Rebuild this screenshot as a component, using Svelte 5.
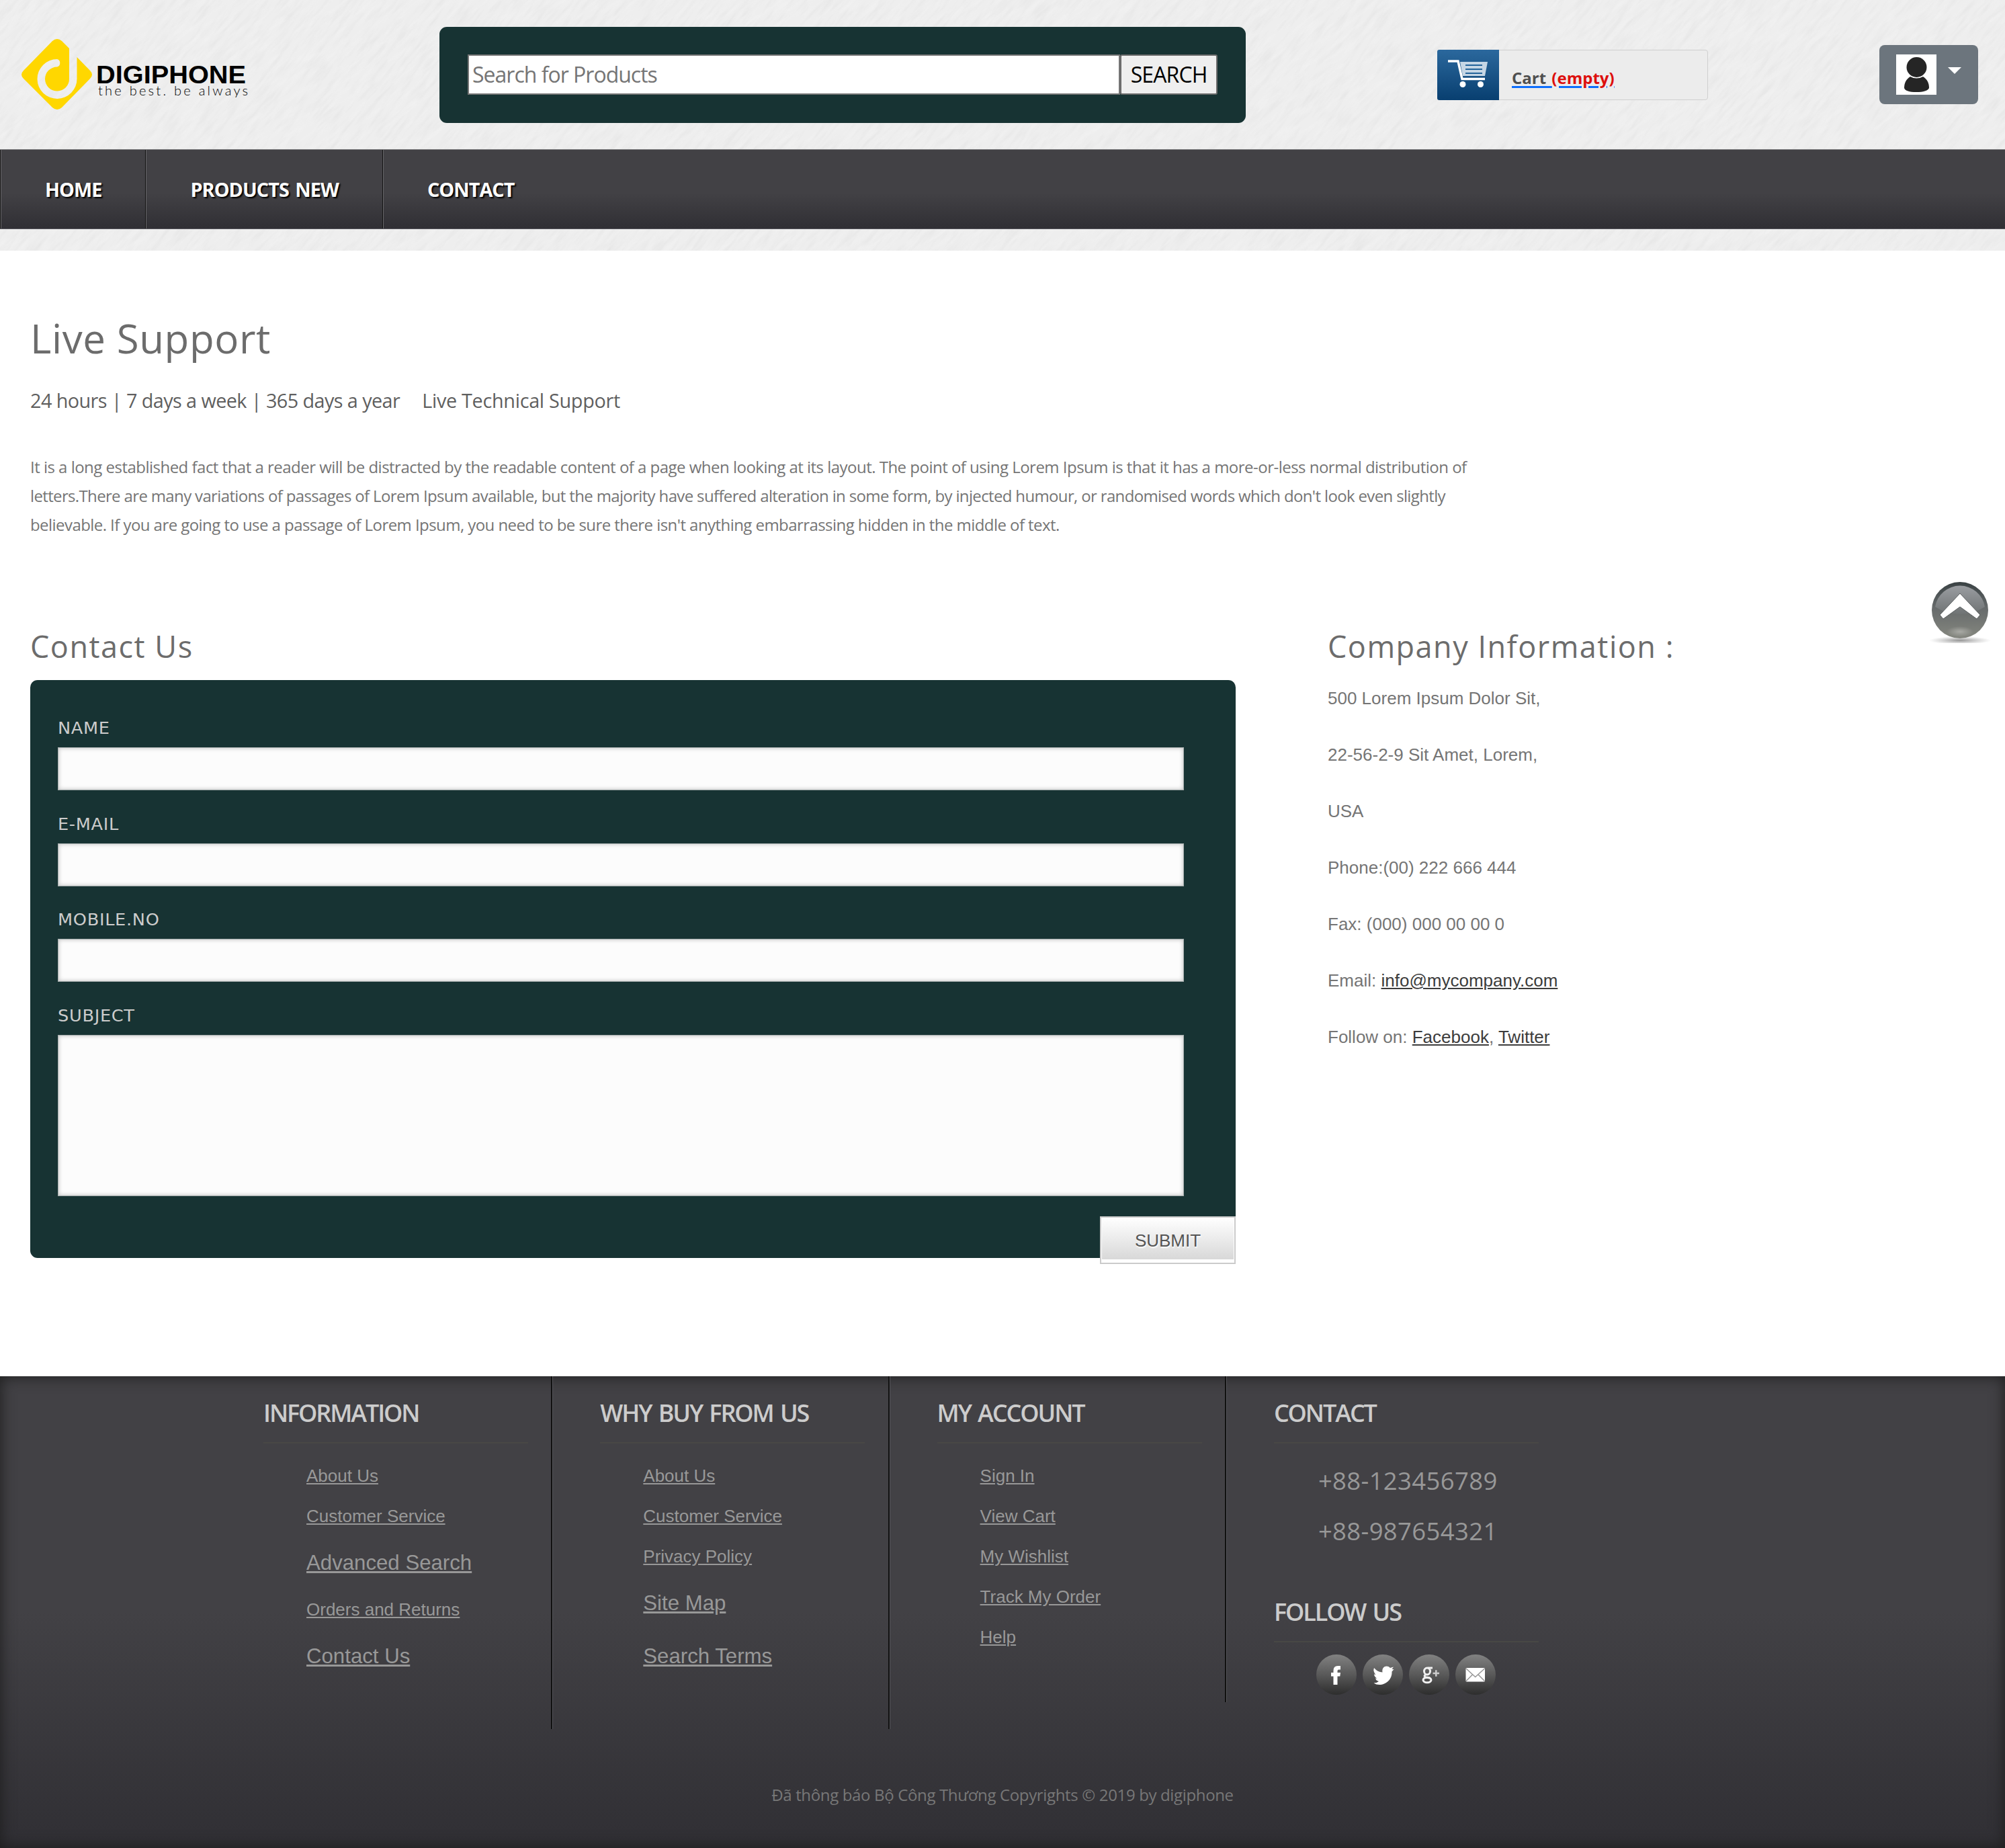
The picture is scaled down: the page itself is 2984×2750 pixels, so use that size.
<script>
  const nav = ['Home', 'Products New', 'Contact'];
  const fields = ['Name', 'E-mail', 'Mobile.No'];
  const columns = [
    {
      title: 'Information',
      links: [
        { text: 'About Us' },
        { text: 'Customer Service' },
        { text: 'Advanced Search', large: true },
        { text: 'Orders and Returns' },
        { text: 'Contact Us', large: true }
      ]
    },
    {
      title: 'Why buy from us',
      links: [
        { text: 'About Us' },
        { text: 'Customer Service' },
        { text: 'Privacy Policy' },
        { text: 'Site Map', large: true },
        { text: 'Search Terms', large: true }
      ]
    },
    {
      title: 'My account',
      short: true,
      links: [
        { text: 'Sign In' },
        { text: 'View Cart' },
        { text: 'My Wishlist' },
        { text: 'Track My Order' },
        { text: 'Help' }
      ]
    }
  ];
</script>

<div class="page">
  <!-- brushed paper texture behind the header -->
  <svg class="paper" width="2984" height="373" viewBox="0 0 2984 373" aria-hidden="true">
    <defs>
      <filter id="dark" x="0" y="0" width="100%" height="100%">
        <feTurbulence type="fractalNoise" baseFrequency="0.025 0.15" numOctaves="3" seed="4" />
        <feColorMatrix values="0 0 0 0 0  0 0 0 0 0  0 0 0 0 0  .35 0 0 0 -.145" />
      </filter>
      <filter id="light" x="0" y="0" width="100%" height="100%">
        <feTurbulence type="fractalNoise" baseFrequency="0.025 0.15" numOctaves="3" seed="9" />
        <feColorMatrix values="0 0 0 0 1  0 0 0 0 1  0 0 0 0 1  2.5 0 0 0 -1.1" />
      </filter>
    </defs>
    <rect x="-300" y="-2200" width="3600" height="4800" transform="rotate(-50 1492 186)" filter="url(#dark)" opacity=".17" />
    <rect x="-300" y="-2200" width="3600" height="4800" transform="rotate(-38 1492 186)" filter="url(#light)" opacity=".16" />
  </svg>

  <header class="top">
    <a class="logo" href="#home" aria-label="Digiphone">
      <svg width="380" height="140" viewBox="0 0 380 140">
        <path
          fill="#ffd700"
          d="M78 20Q85 14 92 20L103 31V76A18 18 0 1 1 85 58.500A6 6 0 0 0 85 47A29.500 29.500 0 1 0 114.500 76V44L134 64Q140 70 134 76L92 119Q85 125 78 119L35 76Q29 70 35 64Z"
        />
        <text class="brand" x="143" y="83" textLength="223" lengthAdjust="spacingAndGlyphs">DIGIPHONE</text>
        <text class="tag" x="146" y="100.500" textLength="223" lengthAdjust="spacing">the best. be always</text>
      </svg>
    </a>

    <form class="search">
      <input type="text" placeholder="Search for Products" />
      <button type="button">SEARCH</button>
    </form>

    <a class="cart" href="#cart">
      <span class="cart-icon">
        <svg width="92" height="74" viewBox="0 0 92 74">
          <path fill="#c5d6e5" d="M34 18H75L71 39H38Z" />
          <path stroke="#23639a" stroke-width="2.200" d="M42 23H67M42 29H67M42 35H67" />
          <path fill="none" stroke="#fff" stroke-width="3.500" d="M16 17H31L37 43.500H71" />
          <circle cx="38" cy="51.500" r="4.500" fill="#fff" />
          <circle cx="64.500" cy="51.500" r="4.500" fill="#fff" />
        </svg>
      </span>
      <span class="cart-text">Cart <b>(empty)</b></span>
    </a>

    <button class="profile" type="button" aria-label="Account">
      <svg width="60" height="60" viewBox="0 0 60 60">
        <rect width="60" height="60" fill="#fff" />
        <ellipse cx="30.500" cy="19" rx="15" ry="15" fill="#252525" />
        <path fill="#252525" d="M21 33Q30 38 40 33C46 37 49 42 49 50Q46 56 30 56T12 50C12 42 15 37 21 33Z" />
      </svg>
      <i class="caret"></i>
    </button>
  </header>

  <nav class="menu">
    {#each nav as item}
      <a href="#{item}">{item}</a>
    {/each}
  </nav>

  <main>
    <h1>Live Support</h1>
    <p class="hours"><span>24 hours | 7 days a week | 365 days a year</span><span class="tech">Live Technical Support</span></p>
    <div class="intro">
      <p class="l1">It is a long established fact that a reader will be distracted by the readable content of a page when looking at its layout. The point of using Lorem Ipsum is that it has a more-or-less normal distribution of</p>
      <p class="l2">letters.There are many variations of passages of Lorem Ipsum available, but the majority have suffered alteration in some form, by injected humour, or randomised words which don't look even slightly</p>
      <p class="l3">believable. If you are going to use a passage of Lorem Ipsum, you need to be sure there isn't anything embarrassing hidden in the middle of text.</p>
    </div>

    <div class="row">
      <section class="contact">
        <h2>Contact Us</h2>
        <form class="panel">
          {#each fields as field}
            <label>{field}<input type="text" /></label>
          {/each}
          <label>Subject<textarea></textarea></label>
          <button class="submit" type="button"><span>Submit</span></button>
        </form>
      </section>

      <section class="company">
        <h2>Company Information :</h2>
        <p>500 Lorem Ipsum Dolor Sit,</p>
        <p>22-56-2-9 Sit Amet, Lorem,</p>
        <p>USA</p>
        <p>Phone:(00) 222 666 444</p>
        <p>Fax: (000) 000 00 00 0</p>
        <p>Email: <a href="#mail">info@mycompany.com</a></p>
        <p>Follow on: <a href="#facebook">Facebook</a>, <a href="#twitter">Twitter</a></p>
      </section>
    </div>
  </main>

  <footer>
    <div class="cols">
      {#each columns as col}
        <section class="col" class:short={col.short}>
          <h4>{col.title}</h4>
          <ul>
            {#each col.links as link}
              <li class:large={link.large}><a href="#{link.text}">{link.text}</a></li>
            {/each}
          </ul>
        </section>
      {/each}
      <section class="col last">
        <h4>Contact</h4>
        <ul class="phones">
          <li>+88-123456789</li>
          <li>+88-987654321</li>
        </ul>
        <h4 class="follow">Follow us</h4>
        <div class="social">
          <a href="#facebook" aria-label="Facebook">
            <svg viewBox="0 0 60 60"><path fill="#fff" d="M25.500 45V32.500H22V27H25.500V24Q25.500 17 32 17H36V22.500H33.500Q31.500 22.500 31.500 24.500V27H36L35.300 32.500H31.500V45Z" /></svg>
          </a>
          <a href="#twitter" aria-label="Twitter">
            <svg viewBox="0 0 60 60"><path fill="#fff" d="M17 20Q22 26 29.500 26.500C28 17 37 15.500 41 20L46 18.500 43.500 22 46.500 22 43.500 25.500C44 37 35 45 25 45Q20 45 16.500 42.500 21 42.500 24 40 20 39 19 35.500H21.500Q17.500 33.500 17 29.500L19.500 30Q15 25 17 20Z" /></svg>
          </a>
          <a href="#google" aria-label="Google Plus">
            <svg viewBox="0 0 60 60">
              <g fill="none" stroke="#f0f0f0" stroke-width="3">
                <ellipse cx="27" cy="25" rx="4.500" ry="5" />
                <path d="M28 20H35M25 30Q21 32 25 34L31 35M35 30" />
                <ellipse cx="27" cy="38" rx="6" ry="3.800" />
                <path stroke="#ccc" stroke-width="2.500" d="M35.500 28H45M40.300 23.300V32.700" />
              </g>
            </svg>
          </a>
          <a href="#mail" aria-label="Mail">
            <svg viewBox="0 0 60 60">
              <rect x="15.500" y="20" width="28.500" height="20.500" rx="1.500" fill="#fff" />
              <path fill="none" stroke="#999" stroke-width="1.600" d="M16 21L29.700 33.500 43.500 21M16 39.500L25.500 30M43.500 39.500L34 30" />
            </svg>
          </a>
        </div>
      </section>
    </div>
    <p class="copy">Đã thông báo Bộ Công Thương Copyrights © 2019 by digiphone</p>
  </footer>

  <a class="to-top" href="#top" aria-label="Back to top">
    <svg width="100" height="92" viewBox="0 0 100 92">
      <defs>
        <linearGradient id="ball" x1="0" y1="0" x2="0" y2="1">
          <stop offset="0" stop-color="#394143" />
          <stop offset=".45" stop-color="#666a6b" />
          <stop offset="1" stop-color="#85877f" />
        </linearGradient>
        <linearGradient id="gloss" x1="0" y1="0" x2="0" y2="1">
          <stop offset="0" stop-color="#9a9da1" />
          <stop offset="1" stop-color="#6f7374" />
        </linearGradient>
        <radialGradient id="glow"><stop offset="0" stop-color="#a9aaa5" /><stop offset="1" stop-color="#a9aaa5" stop-opacity="0" /></radialGradient>
        <radialGradient id="ground"><stop offset="0" stop-color="#777" stop-opacity=".8" /><stop offset="1" stop-color="#999" stop-opacity="0" /></radialGradient>
      </defs>
      <ellipse cx="50" cy="88" rx="46" ry="6" fill="url(#ground)" />
      <circle cx="50" cy="43" r="42" fill="url(#ball)" />
      <path fill="url(#gloss)" d="M13 38A37.500 37.500 0 0 1 87 38Q70 49 50 49T13 38Z" />
      <ellipse cx="50" cy="75" rx="20" ry="8" fill="url(#glow)" />
      <path fill="#fff" stroke="#5c6061" stroke-width="1" d="M50 18L80 50 75 56 50 38 25 56 20 50Z" />
    </svg>
  </a>
</div>

<style>
  :global(body) {
    background: #fff;
  }
  .page {
    position: relative;
    width: 2984px;
    height: 2750px;
    overflow: hidden;
    font-family: 'Open Sans', 'Noto Sans', sans-serif;
    background: #eee;
  }
  .page :global(*) {
    box-sizing: border-box;
  }
  .paper {
    position: absolute;
    top: 0;
    left: 0;
  }
  .top,
  .menu,
  main,
  footer {
    position: relative;
  }
  h1, h2, h4, p, ul {
    margin: 0;
    padding: 0;
    font-weight: 400;
    white-space: nowrap;
  }
  ul {
    list-style: none;
  }

  .top {
    display: flex;
    align-items: center;
    height: 222px;
  }
  .logo {
    display: block;
    width: 380px;
    height: 140px;
    margin-right: 274px;
  }
  .brand {
    font: 700 37px 'Liberation Sans', sans-serif;
  }
  .tag {
    font: 300 20px Lato, sans-serif;
  }
  .search {
    display: flex;
    width: 1200px;
    height: 143px;
    padding: 41px 42px;
    margin-right: 285px;
    border-radius: 11px;
    background: #173333;
  }
  .search input {
    width: 972px;
    height: 60px;
    padding: 0 5px;
    border: 2px solid #767676;
    background: #fff;
    font: 32px 'Open Sans', sans-serif;
    letter-spacing: -1px;
  }
  .search input::placeholder {
    color: #757575;
  }
  .search button {
    width: 145px;
    height: 60px;
    padding: 0;
    border: 2px solid #6b6b6b;
    border-radius: 3px;
    background: #efefef;
    color: #000;
    font: 32px 'Open Sans', sans-serif;
    letter-spacing: -0.9px;
  }
  .cart {
    display: flex;
    width: 403px;
    height: 75px;
    margin-right: 255px;
    border: 1px solid #cfcfcf;
    border-radius: 4px;
    background: #ececec;
    text-decoration: none;
  }
  .cart-icon {
    width: 92px;
    height: 75px;
    margin: -1px 19px 0 -1px;
    border-radius: 3px 0 0 3px;
    background: linear-gradient(#2b689d, #083f70);
  }
  .cart-text {
    font-size: 24px;
    line-height: 82px;
    font-weight: 700;
    letter-spacing: 0;
    word-spacing: 2px;
    color: #4f4f4f;
    white-space: nowrap;
    text-decoration: underline #0d6efd 3px;
    text-underline-offset: 3px;
  }
  .cart-text b {
    font-weight: 700;
    color: #dd0f0e;
  }
  .profile {
    display: flex;
    align-items: flex-start;
    width: 147px;
    height: 88px;
    padding: 14px 25px;
    border: 0;
    border-radius: 8px;
    background: #6c757d;
  }
  .profile svg {
    flex: none;
  }
  .caret {
    margin: 19px 0 0 17px;
    border: 10px solid transparent;
    border-top-color: #fff;
    border-bottom: 0;
  }

  .menu {
    display: flex;
    height: 119px;
    border-top: 1px solid #7b7b7d;
    border-bottom: 1px solid #55545a;
    background: linear-gradient(#424145 55%, #302f34);
  }
  .menu a {
    padding: 0 65px 0 66px;
    border-left: 1px solid #111;
    box-shadow: inset 1px 0 #69686b;
    color: #fff;
    font-size: 28.8px;
    font-weight: 700;
    letter-spacing: -0.95px;
    word-spacing: 3px;
    line-height: 118px;
    text-decoration: none;
    text-shadow: 2px 2px 2px #000;
    text-transform: uppercase;
    white-space: nowrap;
  }

  main {
    height: 1675px;
    margin-top: 32px;
    padding: 90px 45px 0;
    background: #fff;
    color: #757575;
  }
  h1 {
    font-size: 60px;
    line-height: 80px;
    letter-spacing: 0.6px;
    color: #6c6c6c;
  }
  .hours {
    display: flex;
    gap: 33px;
    margin-top: 33px;
    font-size: 28.8px;
    line-height: 40px;
    letter-spacing: -0.58px;
    color: #5f5f5f;
  }
  .tech {
    letter-spacing: -0.3px;
  }
  .intro {
    margin-top: 57px;
    font-size: 24px;
    line-height: 43px;
  }
  .l1 {
    letter-spacing: -0.517px;
  }
  .l2 {
    letter-spacing: -0.648px;
  }
  .l3 {
    letter-spacing: -0.56px;
  }
  .row {
    display: flex;
    margin-top: 130px;
  }
  h2 {
    font-size: 45px;
    line-height: 60px;
    letter-spacing: 1.5px;
    color: #6c6c6c;
  }
  .contact {
    width: 1794px;
    margin-right: 137px;
  }
  .panel {
    height: 860px;
    margin-top: 20px;
    padding: 52px 0 0 41px;
    border-radius: 11px;
    background: #173333;
  }
  .panel label {
    display: block;
    height: 142.6px;
    color: #ccc;
    font: 25.6px/39px 'DejaVu Sans', sans-serif;
    letter-spacing: 0.7px;
    text-transform: uppercase;
  }
  .panel label input,
  .panel textarea {
    display: block;
    width: 1676px;
    height: 64px;
    margin-top: 9px;
    border: 1px solid #a5adad;
    background: #fcfcfc;
    box-shadow: inset 0 0 6px #bbb;
    resize: none;
  }
  .panel textarea {
    height: 240px;
  }
  .submit {
    display: block;
    width: 202px;
    height: 71px;
    margin: 176px 0 0 auto;
    padding: 0 1px 5px;
    border: 2px solid #cbcbcb;
    background: #fff;
  }
  .submit span {
    display: block;
    height: 62px;
    background: linear-gradient(#fff, #d8d8d8);
    color: #555;
    font: 26px/68px 'Liberation Sans', sans-serif;
    text-shadow: 1px 2px 2px #fff;
    text-transform: uppercase;
  }
  .company h2 {
    margin-bottom: 5px;
  }
  .company p {
    font: 26px/84px 'Liberation Sans', sans-serif;
  }
  .company a {
    color: #3c3c3c;
  }

  footer {
    height: 702px;
    background: linear-gradient(#424145 50%, #302f34);
    box-shadow: inset 0 0 22px #1d1d1d;
    color: #989898;
  }
  .cols {
    display: flex;
    align-items: flex-start;
    height: 603px;
    padding-left: 321px;
  }
  .col {
    width: 501.3px;
    height: 525px;
    padding: 25px 0 0 71px;
    border-right: 2px solid #111;
    box-shadow: 1px 0 #55555a;
  }
  .short {
    height: 485px;
  }
  .last {
    border: 0;
    box-shadow: none;
  }
  h4 {
    width: 394px;
    height: 75px;
    margin-bottom: 18px;
    border-bottom: 2px solid #484845;
    color: #ccc;
    font-size: 36px;
    line-height: 60px;
    font-weight: 600;
    letter-spacing: -2.1px;
    word-spacing: 3px;
    text-transform: uppercase;
  }
  .col ul {
    padding-left: 64px;
    font: 26px/60px 'Liberation Sans', sans-serif;
  }
  .col ul a {
    color: inherit;
  }
  .col .large {
    font-size: 31.2px;
    line-height: 79px;
  }
  .col .phones {
    padding-left: 66px;
    font: 36.5px/74.5px 'Open Sans', sans-serif;
    letter-spacing: 0.35px;
  }
  .follow {
    margin-top: 54px;
  }
  .social {
    display: flex;
    gap: 9px;
    padding-left: 63px;
  }
  .social a {
    width: 60px;
    height: 60px;
    border-radius: 50%;
    background: linear-gradient(#828282, #555 55%, #2d2d2d);
  }
  .social svg {
    display: block;
  }
  .copy {
    color: #777;
    font-size: 24px;
    line-height: 40px;
    letter-spacing: -0.35px;
    text-align: center;
  }

  .to-top {
    position: absolute;
    top: 865px;
    left: 2867px;
  }
  .to-top svg {
    display: block;
  }
</style>
